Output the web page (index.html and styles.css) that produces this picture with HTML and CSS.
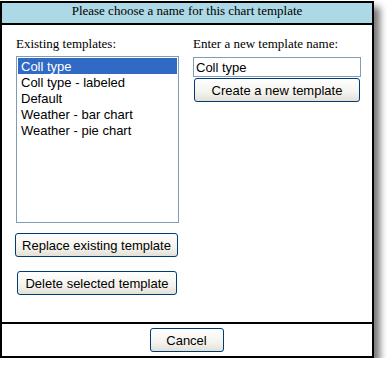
FILE: index.html
```html
<!DOCTYPE html>
<html lang="en">
<head>
    <meta charset="UTF-8">
    <title>Chart template</title>
    <link rel="stylesheet" href="styles.css">
</head>
<body>

<div class="dialog">
    <div class="dialog-title">Please choose a name for this chart template</div>

    <div class="dialog-body">
        <div class="col col-left">
            <div class="field-label">Existing templates:</div>
            <div class="listbox">
                <div class="list-item selected">Coll type</div>
                <div class="list-item">Coll type - labeled</div>
                <div class="list-item">Default</div>
                <div class="list-item">Weather - bar chart</div>
                <div class="list-item">Weather - pie chart</div>
            </div>
            <button class="btn btn-replace">Replace existing template</button>
            <button class="btn btn-delete">Delete selected template</button>
        </div>

        <div class="col col-right">
            <div class="field-label">Enter a new template name:</div>
            <input class="name-input" type="text" value="Coll type">
            <button class="btn btn-create">Create a new template</button>
        </div>
    </div>

    <!-- bottom bar -->
    <div class="dialog-footer">
        <button class="btn btn-cancel">Cancel</button>
    </div>
</div>

</body>
</html>
```

FILE: styles.css
```css
body {
    margin: 0;
    padding-top: 1px;
    background-color: #fff;
    font-family: "Liberation Sans", Arial, sans-serif;
}
.dialog {
    width: 374px;
    box-sizing: border-box;
    border: 2px solid #000;
    background-color: #fff;
    box-shadow: 6px 6px 7px #777;
}
.dialog-title {
    height: 16px;
    padding-bottom: 4px;
    background-color: #add8e6;
    border-bottom: 2px solid #000;
    font-family: "Liberation Serif", "Times New Roman", serif;
    font-size: 13px;
    line-height: 16px;
    text-align: center;
}
.dialog-body {
    height: 297px;
    box-sizing: border-box;
    padding: 11px 12px 0 14px;
    display: flex;
    gap: 14px;
}
.col {
    display: flex;
    flex-direction: column;
    align-items: flex-start;
}
.col-left {
    width: 163px;
}
.col-right {
    width: 168px;
}
.field-label {
    font-family: "Liberation Serif", "Times New Roman", serif;
    font-size: 13px;
    line-height: 16px;
    color: #000;
}
.listbox {
    width: 163px;
    height: 167px;
    box-sizing: border-box;
    margin-top: 4px;
    border: 1px solid #7f9db9;
    padding: 1px;
}
.list-item {
    height: 16px;
    padding: 1px 0 0 3px;
    box-sizing: border-box;
    font-size: 13px;
    line-height: 15px;
    white-space: nowrap;
}
.list-item.selected {
    background-color: #316ac5;
    color: #fff;
}
.name-input {
    width: 168px;
    height: 20px;
    box-sizing: border-box;
    margin: 5px 0 0 0;
    padding: 0 2px;
    border: 1px solid #7f9db9;
    font-family: "Liberation Sans", Arial, sans-serif;
    font-size: 13px;
    outline: none;
}
.btn {
    height: 24px;
    box-sizing: border-box;
    padding: 0;
    border: 1px solid #003c74;
    border-radius: 3px;
    background: linear-gradient(#ffffff, #f4f3ee 60%, #e3e0d6);
    font-family: "Liberation Sans", Arial, sans-serif;
    font-size: 13px;
    color: #000;
}
.btn-create {
    width: 166px;
    margin: 1px 0 0 1px;
}
.btn-replace {
    width: 163px;
    margin: 10px 0 0 -1px;
}
.btn-delete {
    width: 160px;
    margin: 14px 0 0 1px;
}
.dialog-footer {
    height: 28px;
    padding-top: 4px;
    border-top: 2px solid #000;
    text-align: center;
}
.btn-cancel {
    width: 74px;
    margin-left: -1px;
}
```
